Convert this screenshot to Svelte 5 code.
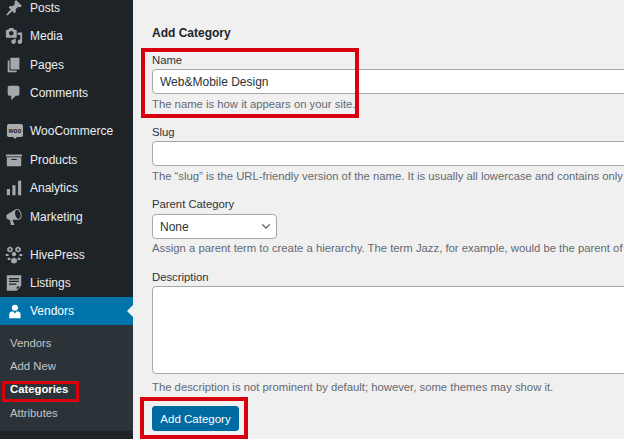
<script lang="ts">
    const menuGroups = [
        [
            { label: "Posts", icon: "pin" },
            { label: "Media", icon: "media" },
            { label: "Pages", icon: "page" },
            { label: "Comments", icon: "comment" },
        ],
        [
            { label: "WooCommerce", icon: "woo" },
            { label: "Products", icon: "box" },
            { label: "Analytics", icon: "bars" },
            { label: "Marketing", icon: "megaphone" },
        ],
        [
            { label: "HivePress", icon: "hive" },
            { label: "Listings", icon: "list" },
        ],
    ];

    const paths: Record<string, string> = {
        pin: "M10.44 3.02l1.82-1.82 6.36 6.35-1.83 1.82c-1.05-.68-2.48-.57-3.41.36l-.75.75c-.92.93-1.04 2.35-.35 3.41l-1.83 1.82-2.41-2.41-2.8 2.79c-.42.42-3.38 2.71-3.8 2.29s1.86-3.39 2.28-3.81l2.79-2.79L4.1 9.36l1.83-1.82c1.05.69 2.48.57 3.4-.36l.75-.75c.93-.92 1.05-2.35.36-3.41z",
        media: "M13 11V4c0-.55-.45-1-1-1h-1.67L9 1H5L3.67 3H2c-.55 0-1 .45-1 1v7c0 .55.45 1 1 1h10c.55 0 1-.45 1-1zM7 4.5c1.38 0 2.5 1.12 2.5 2.5S8.38 9.5 7 9.5 4.5 8.38 4.5 7 5.62 4.5 7 4.5zM14 6h5v10.5c0 1.38-1.12 2.5-2.5 2.5S14 17.88 14 16.5s1.12-2.5 2.5-2.5c.17 0 .34.02.5.05V9h-3V6zm-4 8.05V13h2v3.5c0 1.38-1.12 2.5-2.5 2.5S7 17.88 7 16.5 8.12 14 9.5 14c.17 0 .34.02.5.05z",
        page: "M6 15V2h10v13H6zm-1 1h8v2H3V5h2v11z",
        comment: "M5 2h9c1.1 0 2 .9 2 2v7c0 1.1-.9 2-2 2h-2l-5 5v-5H5c-1.1 0-2-.9-2-2V4c0-1.1.9-2 2-2z",
        box: "M19 4v2H1V4h18zM2 7h16v10H2V7zm11 3V9H7v1h6z",
        bars: "M2 11h3.5v7H2zM8.2 7h3.5v11H8.2zM14.5 2H18v16h-3.5z",
        megaphone: "M18.15 5.94c.46 1.62.38 3.22-.02 4.48-.42 1.28-1.26 2.18-2.3 2.48-.16.06-.26.06-.4.06-.06.02-.12.02-.18.02-.06.02-.14.02-.22.02h-6.8l2.22 5.5c.02.14-.06.26-.14.34-.08.1-.24.16-.34.16H6.95c-.1 0-.26-.06-.34-.16-.08-.08-.16-.2-.14-.34l-1-5.5H4.25l-.02-.02c-.5.06-1.08-.18-1.54-.62s-.88-1.08-1.06-1.88c-.24-.8-.2-1.56-.02-2.2.18-.62.58-1.08 1.06-1.3l.02-.02 9-5.4c.1-.06.18-.1.24-.16.06-.04.14-.08.24-.12.16-.08.28-.12.5-.18 1.04-.3 2.24.1 3.22.98s1.84 2.24 2.26 3.86zm-2.58 5.98h-.02c.4-.1.74-.34 1.04-.7.58-.7.86-1.76.86-3.04-.02-.64-.1-1.3-.28-1.98-.34-1.36-1.02-2.5-1.78-3.24s-1.68-1.1-2.46-.88c-.38.12-.72.34-.98.7-.58.72-.84 1.78-.82 3.04 0 .64.08 1.3.26 1.98.34 1.34 1.02 2.48 1.78 3.22.78.74 1.62 1.1 2.4.9z",
        hive: "M5.500 .5l3 1.700v3.400l-3 1.700-3-1.700V2.200zM14.500 .5l3 1.700v3.400l-3 1.700-3-1.700V2.200zM5.500 2.500L4.500 3.200v1.400l1 .7 1-.7V3.200zM14.500 2.500l-1 .7v1.400l1 .7 1-.7V3.200zM10 6.500l2.300 1.300v2.600L10 11.700l-2.300-1.300V7.800zM.8 8.800h3.200v2.400H.8zM16 8.800h3.200v2.400H16zM10 12.800l3.200 1.800v3.400L10 19.800l-3.200-1.800v-3.400zM3 13h3v2.500H3zM14 13h3v2.500h-3z",
        list: "M2 1.500h16v11.500l-5 5.500H2zM4.500 4.500v1.500h11V4.500zM4.500 7.500v1.500h11V7.500zM4.500 10.500v1.500h8v-1.500zM13 14v3l3.500-3z",
    };
    const subItems = ["Vendors", "Add New", "Categories", "Attributes"];
</script>

<div class="screen">
    <aside class="sidebar">
        <div class="menu">
            {#each menuGroups as group}
                <ul class="group">
                    {#each group as item}
                        <li class="item">
                            {#if item.icon === "woo"}
                                <span class="woo">woo</span>
                            {:else}
                                <svg class="icon" viewBox="0 0 20 20" fill-rule="evenodd"><path d={paths[item.icon]} /></svg>
                            {/if}
                            <span>{item.label}</span>
                        </li>
                    {/each}
                </ul>
            {/each}
            <div class="current">
                <svg class="icon white" viewBox="0 0 20 20"><path d="M11 3a3.400 3.400 0 0 1 0 6.800A3.400 3.400 0 0 1 11 3zM7.800 10.500h1.700L11 13l1.500-2.500h1.700c1.800 0 3.100 1.400 3.100 3.200v4.300H4.700v-4.300c0-1.800 1.300-3.200 3.100-3.200z" /></svg>
                <span>Vendors</span>
                <i class="arrow"></i>
            </div>
            <ul class="sub">
                {#each subItems as name}
                    <li class:active={name === "Categories"}>{name}</li>
                {/each}
            </ul>
        </div>
        <div class="mark mark-side"></div>
    </aside>

    <main class="content">
        <h2>Add Category</h2>
        <div class="field">
            <label for="tag-name">Name</label>
            <input id="tag-name" type="text" value="Web&Mobile Design" />
            <p>The name is how it appears on your site.</p>
        </div>
        <div class="field">
            <label for="tag-slug">Slug</label>
            <input id="tag-slug" type="text" />
            <p>The “slug” is the URL-friendly version of the name. It is usually all lowercase and contains only</p>
        </div>
        <div class="field parent">
            <label for="parent">Parent Category</label>
            <div class="select-wrap">
                <select id="parent"><option>None</option></select>
                <svg class="chevron" viewBox="0 0 12 8"><path d="M1.500 1.500 6 6l4.500-4.500" /></svg>
            </div>
            <p>Assign a parent term to create a hierarchy. The term Jazz, for example, would be the parent of</p>
        </div>
        <div class="field">
            <label for="desc">Description</label>
            <textarea id="desc"></textarea>
            <p class="desc-note">The description is not prominent by default; however, some themes may show it.</p>
        </div>
        <button type="button">Add Category</button>

        <div class="mark mark-name"></div>
        <div class="mark mark-btn"></div>
    </main>
</div>

<style>
    :global(body) {
        margin: 0;
        background: #f0f0f1;
    }

    .screen {
        display: flex;
        width: 624px;
        height: 439px;
        overflow: hidden;
        font-family: "Liberation Sans", Arial, sans-serif;
    }

    .sidebar {
        position: relative;
        flex: 0 0 133px;
        background: #1d2327;
        color: #eceeef;
        font-size: 12px;
    }

    .menu {
        margin-top: -6.500px;
    }

    ul {
        list-style: none;
        margin: 0;
        padding: 0;
    }

    .group {
        margin-bottom: 9.500px;
    }

    .group:nth-child(3) {
        margin-bottom: -0.500px;
    }

    .item,
    .current {
        display: flex;
        align-items: center;
        height: 28.500px;
        padding-left: 5px;
    }

    .icon {
        flex: 0 0 18px;
        height: 18px;
        margin-right: 7px;
        fill: #a3a8ac;
    }

    .icon.white {
        fill: #fff;
    }

    .woo {
        position: relative;
        flex: 0 0 16px;
        height: 13px;
        margin: -2px 7px 0 2px;
        border-radius: 2px;
        background: #a9adb0;
        color: #1d2327;
        font-size: 6.500px;
        font-weight: 700;
        line-height: 13px;
        text-align: center;
    }

    .woo::after {
        content: "";
        position: absolute;
        left: 6px;
        bottom: -2px;
        border: 2px solid transparent;
        border-bottom: 0;
        border-top-color: #a9adb0;
    }

    .current {
        position: relative;
        height: 28px;
        background: #0073aa;
        color: #fff;
    }

    .arrow {
        position: absolute;
        right: 0;
        top: 8px;
        border: 6px solid transparent;
        border-left: 0;
        border-right-color: #f0f0f1;
    }

    .sub {
        padding: 6.500px 0 6px 10px;
        background: #2c3338;
        color: #c3c4c7;
        font-size: 11.300px;
    }

    .sub li {
        height: 23.400px;
        line-height: 23.400px;
    }

    .sub .active {
        color: #fff;
        font-weight: 700;
    }

    .content {
        position: relative;
        flex: 1;
        min-width: 0;
        padding: 0 0 0 19px;
        color: #3c434a;
        font-size: 11.300px;
        overflow: hidden;
    }

    h2 {
        margin: 25px 0 11px;
        height: 16px;
        color: #1d2327;
        font-size: 12px;
        font-weight: 700;
        line-height: 16px;
    }

    .field {
        display: flex;
        flex-direction: column;
        margin-bottom: 12px;
    }

    label {
        height: 17px;
        line-height: 16px;
        color: #2c3338;
    }

    input,
    textarea,
    select {
        box-sizing: border-box;
        border: 1px solid #a5a8ab;
        border-radius: 4px;
        background: #fff;
        color: #2c3338;
        font: 12px "Liberation Sans", Arial, sans-serif;
        outline: none;
    }

    input {
        width: 600px;
        height: 25px;
        padding: 0 7px;
    }

    textarea {
        display: block;
        width: 600px;
        height: 88px;
        resize: none;
    }

    .select-wrap {
        position: relative;
        width: 125px;
    }

    select {
        display: block;
        width: 125px;
        height: 25px;
        padding: 0 7px;
        appearance: none;
    }

    .chevron {
        position: absolute;
        right: 6px;
        top: 9px;
        width: 10px;
        height: 7px;
        fill: none;
        stroke: #50575e;
        stroke-width: 1.500;
    }

    p {
        margin: 2px 0 0;
        height: 16px;
        color: #646970;
        line-height: 16px;
        white-space: nowrap;
    }

    .parent {
        margin-bottom: 13px;
    }

    .parent label {
        height: 18px;
    }

    .parent p {
        margin-top: 1px;
    }

    .desc-note {
        margin-top: 5px;
    }

    button {
        display: block;
        width: 87px;
        height: 25px;
        margin-top: -1px;
        padding: 0;
        border: 1px solid #006ba1;
        border-radius: 3px;
        background: #006ba1;
        color: #fff;
        font: 11.500px "Liberation Sans", Arial, sans-serif;
    }

    /* red annotation boxes drawn over the screenshot */
    .mark {
        position: absolute;
        box-sizing: border-box;
        border: 4px solid #d8000f;
    }

    .mark-name {
        left: 8px;
        top: 48px;
        width: 218px;
        height: 70px;
    }

    .mark-btn {
        left: 7px;
        top: 397px;
        width: 108px;
        height: 42px;
    }

    .mark-side {
        left: 2px;
        top: 381px;
        width: 77px;
        height: 21px;
        border-width: 3px;
    }
</style>
